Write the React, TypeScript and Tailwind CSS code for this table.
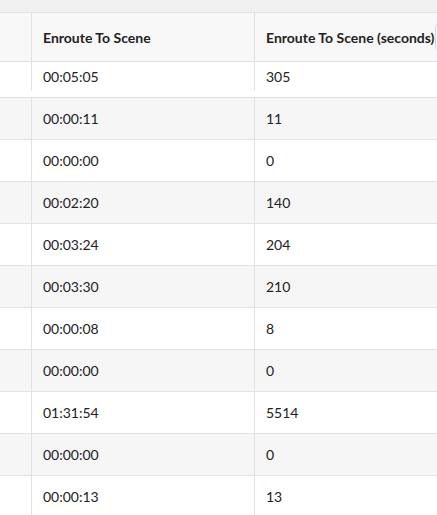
import React from "react";

const rows: [string, string][] = [
  ["00:05:05", "305"],
  ["00:00:11", "11"],
  ["00:00:00", "0"],
  ["00:02:20", "140"],
  ["00:03:24", "204"],
  ["00:03:30", "210"],
  ["00:00:08", "8"],
  ["00:00:00", "0"],
  ["01:31:54", "5514"],
  ["00:00:00", "0"],
  ["00:00:13", "13"],
];

export default function App() {
  return (
    <div
      className="w-[437px] h-[515px] overflow-hidden bg-white text-[#222]"
      style={{ fontFamily: "Lato, 'Open Sans', sans-serif" }}
    >
      <div className="h-[12px] bg-[#f0f0f0]" />
      <div className="flex h-[50px] bg-[#f8f8f8] border-y border-[#e2e2e6]">
        <div className="w-[32px] shrink-0 border-r border-[#e2e2e6]" />
        <div className="w-[223px] shrink-0 border-r border-[#e2e2e6] flex items-center pl-[11px] text-[14px] font-bold">
          Enroute To Scene
        </div>
        <div className="flex-1 flex items-center pl-[11px] text-[14px] font-bold whitespace-nowrap relative">
          Enroute To Scene (seconds)
          <div className="absolute left-[180px] top-[9px] w-[12px] h-[30px] rounded-l-[6px] border border-[#d6d6da] bg-white" />
        </div>
      </div>
      {rows.map((r, i) => (
        <div
          key={i}
          className={
            "flex border-b border-[#e2e2e6] " +
            (i === 0 ? "h-[36px] pb-[6px] " : "h-[42px] ") +
            (i % 2 === 1 ? "bg-[#f6f6f6]" : "bg-white")
          }
        >
          <div className="w-[32px] shrink-0 border-r border-[#e2e2e6]" />
          <div className="w-[223px] shrink-0 border-r border-[#e2e2e6] flex items-center pl-[11px] text-[14px]">
            {r[0]}
          </div>
          <div className="flex-1 flex items-center pl-[11px] text-[14px]">{r[1]}</div>
        </div>
      ))}
    </div>
  );
}
